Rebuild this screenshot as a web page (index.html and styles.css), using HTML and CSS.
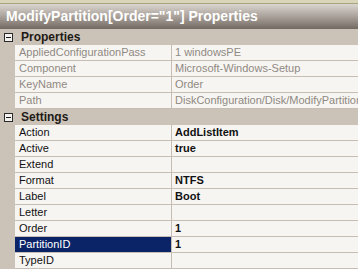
FILE: index.html
```html
<!DOCTYPE html>
<html lang="en">
<head>
  <meta charset="UTF-8">
  <title>ModifyPartition Properties</title>
  <link rel="stylesheet" href="styles.css">
</head>
<body>
  <div class="topstrip"></div>
  <div class="title">ModifyPartition[Order="1"] Properties</div>

  <div class="grid">
    <div class="category">
      <div class="margin"><span class="toggle"></span></div>
      <div class="cat-name">Properties</div>
    </div>
    <div class="row readonly">
      <div class="margin"></div>
      <div class="name">AppliedConfigurationPass</div>
      <div class="value">1 windowsPE</div>
    </div>
    <div class="row readonly">
      <div class="margin"></div>
      <div class="name">Component</div>
      <div class="value">Microsoft-Windows-Setup</div>
    </div>
    <div class="row readonly">
      <div class="margin"></div>
      <div class="name">KeyName</div>
      <div class="value">Order</div>
    </div>
    <div class="row readonly">
      <div class="margin"></div>
      <div class="name">Path</div>
      <div class="value">DiskConfiguration/Disk/ModifyPartitions/ModifyPartition</div>
    </div>

    <div class="category">
      <div class="margin"><span class="toggle"></span></div>
      <div class="cat-name">Settings</div>
    </div>
    <div class="row">
      <div class="margin"></div>
      <div class="name">Action</div>
      <div class="value set">AddListItem</div>
    </div>
    <div class="row">
      <div class="margin"></div>
      <div class="name">Active</div>
      <div class="value set">true</div>
    </div>
    <div class="row">
      <div class="margin"></div>
      <div class="name">Extend</div>
      <div class="value"></div>
    </div>
    <div class="row">
      <div class="margin"></div>
      <div class="name">Format</div>
      <div class="value set">NTFS</div>
    </div>
    <div class="row">
      <div class="margin"></div>
      <div class="name">Label</div>
      <div class="value set">Boot</div>
    </div>
    <div class="row">
      <div class="margin"></div>
      <div class="name">Letter</div>
      <div class="value"></div>
    </div>
    <div class="row">
      <div class="margin"></div>
      <div class="name">Order</div>
      <div class="value set">1</div>
    </div>
    <div class="row selected">
      <div class="margin"></div>
      <div class="name">PartitionID</div>
      <div class="value set">1</div>
    </div>
    <div class="row">
      <div class="margin"></div>
      <div class="name">TypeID</div>
      <div class="value"></div>
    </div>
  </div>
</body>
</html>
```

FILE: styles.css
```css
body {
  margin: 0;
  width: 358px;
  height: 269px;
  overflow: hidden;
  font-family: 'Liberation Sans', Arial, sans-serif;
  font-size: 11px;
  background: #f7f5f2;
}

.topstrip {
  height: 3px;
  background: #d8d5bb;
  border-bottom: 1px solid #a8a57c;
}

.title {
  height: 25px;
  line-height: 25px;
  padding-left: 6px;
  background: linear-gradient(#dbd6d0, #a49c95 55%, #716962);
  color: #ffffff;
  font-weight: bold;
  font-size: 14px;
  white-space: nowrap;
  overflow: hidden;
}

.grid {
  display: flex;
  flex-direction: column;
}

.category,
.row {
  display: flex;
  height: 16px;
}

.margin {
  width: 15px;
  flex: none;
  background: #cbc2b8;
  position: relative;
}

.category {
  background: #cbc2b8;
}

.toggle {
  position: absolute;
  left: 4px;
  top: 4px;
  width: 7px;
  height: 7px;
  border: 1px solid #2b2b2b;
  background: #f4f2ef;
}

.toggle::after {
  content: "";
  position: absolute;
  left: 1px;
  top: 3px;
  width: 5px;
  height: 1px;
  background: #1c1c1c;
}

.cat-name {
  padding-left: 6px;
  line-height: 16px;
  font-weight: bold;
  font-size: 12px;
  color: #1e1a16;
}

.name {
  width: 152px;
  flex: none;
  padding-left: 4px;
  line-height: 15px;
  border-bottom: 1px solid #c6beb4;
  border-right: 1px solid #c6beb4;
  color: #111111;
  white-space: nowrap;
  overflow: hidden;
}

.value {
  flex: 1;
  padding-left: 3px;
  line-height: 15px;
  border-bottom: 1px solid #c6beb4;
  color: #111111;
  white-space: nowrap;
  overflow: hidden;
}

.value.set {
  font-weight: bold;
}

.readonly .name,
.readonly .value {
  color: #8f8982;
}

.selected .name {
  background: #0b2468;
  color: #ffffff;
}
```
